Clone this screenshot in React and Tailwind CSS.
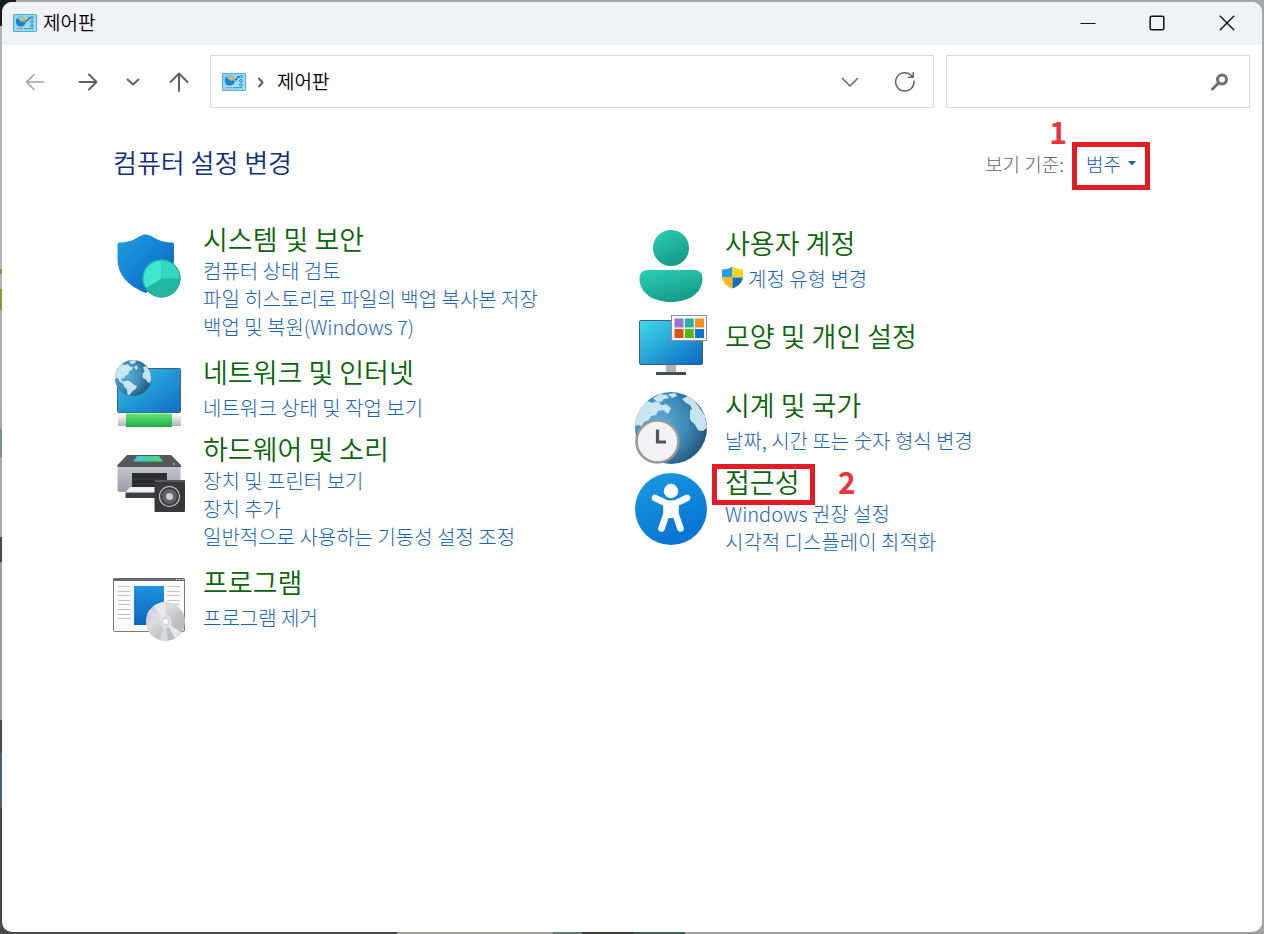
import React from 'react';

const ControlPanelIcon = () => (
  <svg width="24" height="18" viewBox="0 0 24 18" aria-hidden="true" className="shrink-0">
    <defs>
      <linearGradient id="cp" x1="0" y1="0" x2="1" y2="1">
        <stop offset="0" stopColor="#7fd3f3" />
        <stop offset="1" stopColor="#a9e4fb" />
      </linearGradient>
    </defs>
    <rect x=".5" y=".5" width="23" height="17" rx=".5" fill="url(#cp)" stroke="#4fb0d6" />
    <circle cx="7.800" cy="7.600" r="5" fill="#1b84cf" />
    <path d="M8 7.600V2.600a5 5 0 0 1 4.800 5z" fill="#e3b566" />
    <path d="M8 7.600V2.600a5 5 0 0 0-3.600 1.600z" fill="#8fc6e0" />
    <path d="M12.800 6.800h1.400l1.800-3h1.600" stroke="#1f639c" strokeWidth="1.200" fill="none" />
    <rect x="17.500" y="2.600" width="2.800" height="2" rx="1" fill="none" stroke="#2b7cb6" strokeWidth=".9" />
    <rect x="17.500" y="6.600" width="2.800" height="2.400" rx="1.200" fill="none" stroke="#2b7cb6" strokeWidth=".9" />
    <rect x="17.500" y="10.600" width="2.800" height="2.400" rx="1.200" fill="none" stroke="#2b7cb6" strokeWidth=".9" />
    <path d="M3.500 14.700h6.500" stroke="#b3915c" />
    <path d="M11 14.700h9.500" stroke="#3c8bbd" />
  </svg>
);

const Globe = ({ id, children }) => (
  <g>
    <defs>
      <radialGradient id={id} cx=".32" cy=".42" r=".72">
        <stop offset="0" stopColor="#62add4" />
        <stop offset=".55" stopColor="#3f8cb8" />
        <stop offset="1" stopColor="#1f5277" />
      </radialGradient>
      <clipPath id={`${id}c`}>
        <circle cx="36" cy="36" r="36" />
      </clipPath>
    </defs>
    <circle cx="36" cy="36" r="36" fill={`url(#${id})`} />
    <g clipPath={`url(#${id}c)`} fill="#d3edf7" opacity=".92">
      {children}
    </g>
  </g>
);

const SecurityIcon = () => (
  <svg viewBox="0 0 72 72" className="size-full" aria-hidden="true">
    <defs>
      <linearGradient id="sh" x1="0" y1="0" x2="1" y2="1">
        <stop offset="0" stopColor="#20a0e2" />
        <stop offset="1" stopColor="#0660c0" />
      </linearGradient>
    </defs>
    <path d="M32.500 4.500C26 4.500 22 12.500 6 12.500q-1.500 0-1.500 2V29c0 17 13 28 28 34 15-6 28.500-16 28.500-34V14.500q0-2-1.500-2C44 12.500 39 4.500 32.500 4.500z" fill="url(#sh)" />
    <circle cx="48.500" cy="48.500" r="19" fill="#22b8a0" />
    <path d="M48.500 48.500V29.500A19 19 0 0 0 32.500 58.600z" fill="#3fe6d0" />
    <path d="M48.500 48.500V29.500A19 19 0 0 1 67.500 48.500z" fill="#35d6c0" />
    <circle cx="48.500" cy="48.500" r="18.500" fill="none" stroke="#1fa990" />
  </svg>
);

const NetworkIcon = () => (
  <svg viewBox="0 0 72 72" className="size-full" aria-hidden="true">
    <defs>
      <linearGradient id="ns" x1="0" y1="0" x2="1" y2="1">
        <stop offset="0" stopColor="#35c6e6" />
        <stop offset="1" stopColor="#0f6cc4" />
      </linearGradient>
      <linearGradient id="ng" x1="0" y1="0" x2="0" y2="1">
        <stop offset="0" stopColor="#62ea77" />
        <stop offset="1" stopColor="#1fa945" />
      </linearGradient>
      <linearGradient id="nw" x1="0" y1="0" x2="0" y2="1">
        <stop offset="0" stopColor="#ffffff" />
        <stop offset="1" stopColor="#b4b4b8" />
      </linearGradient>
    </defs>
    <rect x="4.500" y="10.500" width="63" height="44" rx="1" fill="url(#ns)" stroke="#456275" />
    <rect x="5" y="56" width="63" height="12" rx="1" fill="url(#nw)" />
    <rect x="13" y="55.500" width="46" height="13.500" fill="url(#ng)" />
    <g transform="translate(2 2) scale(.5)">
      <Globe id="g1">
        <path d="M-2 38C0 24 4 14 12 8l8 2 6-2 4 5 6 1-2 6-6 2-1 6-7 4-2 5-5-1 1 6 5 3-2 3-7-4-5-8z" />
        <path d="M28 3l8-3 8 1-5 6-6 1zM38 13l5-2 3 5-4 4z" />
        <path d="M17 43l8-2 7 3 5 5 7 3-3 6-7 5-5 7-4-1-1-10-7-8z" />
        <path d="M56 14l6-2 10 12v20l-6 2-4-7-6-3-1-8 4-5z" />
      </Globe>
    </g>
  </svg>
);

const HardwareIcon = () => (
  <svg viewBox="0 0 72 72" className="size-full" aria-hidden="true">
    <defs>
      <linearGradient id="pr" x1="0" y1="0" x2="0" y2="1">
        <stop offset="0" stopColor="#c6c9d2" />
        <stop offset="1" stopColor="#979ca7" />
      </linearGradient>
      <linearGradient id="sc" x1="0" y1="0" x2="1" y2="0">
        <stop offset="0" stopColor="#38c7e0" />
        <stop offset="1" stopColor="#4fdc6c" />
      </linearGradient>
    </defs>
    <path d="M4.500 17h63v25a2 2 0 0 1-2 2h-59a2 2 0 0 1-2-2z" fill="url(#pr)" />
    <path d="M14 7h44l10 10v2H4.500v-2z" fill="#55575d" />
    <path d="M24 8h22l4 5.500H20z" fill="url(#sc)" />
    <rect x="60" y="15" width="2" height="2" fill="#43cf5c" />
    <path d="M19 25h35v18H19z" fill="#2c2c30" />
    <path d="M19 31h35M19 36h35" stroke="#3a3a3f" />
    <path d="M17 39h25v5.500H12.500z" fill="#f0f1f3" />
    <path d="M12.500 44.500H42v5.500H12.500z" fill="#3d3d42" />
    <rect x="41.500" y="32" width="30.500" height="32" rx="1" fill="#38383b" />
    <rect x="41.500" y="32" width="30.500" height="2" rx="1" fill="#57575b" />
    <circle cx="56.500" cy="48.500" r="10" fill="#3a3a3d" stroke="#c5c5c7" strokeWidth="1.200" />
    <circle cx="56.500" cy="48.500" r="7.500" fill="#626266" />
    <circle cx="56.500" cy="48.500" r="3.500" fill="#c9cdd2" />
  </svg>
);

const ProgramsIcon = () => (
  <svg viewBox="0 0 72 72" className="size-full" aria-hidden="true">
    <defs>
      <linearGradient id="pb" x1="0" y1="0" x2="0" y2="1">
        <stop offset="0" stopColor="#1c93de" />
        <stop offset="1" stopColor="#0d67bd" />
      </linearGradient>
      <linearGradient id="cd" x1="0" y1="0" x2="1" y2="1">
        <stop offset="0" stopColor="#c2c6ca" />
        <stop offset=".35" stopColor="#dcdedf" />
        <stop offset=".6" stopColor="#c0c3c4" />
        <stop offset="1" stopColor="#b3b6b8" />
      </linearGradient>
    </defs>
    <rect x=".5" y="6.500" width="71" height="53" rx="1.500" fill="#fafafa" stroke="#77787b" />
    <path d="M0 9V8q0-2 2-2h68q2 0 2 2v1z" fill="#68696c" />
    <path d="M63 7.500h1.500M66 7.500h1.500M69 7.500h1.500" stroke="#e8e8e8" />
    <path d="M5 14.500h12M5 19.500h12M5 23.500h12M5 28.500h12M5 32.500h12M5 37.500h12M5 42.500h12M5 46.500h12M54 14.500h13M54 19.500h13M54 23.500h13M54 28.500h13M54 32.500h13" stroke="#c3c4c6" />
    <rect x="21" y="14" width="30" height="39" fill="url(#pb)" />
    <circle cx="52.500" cy="49.500" r="19.500" fill="url(#cd)" />
    <path d="M52.500 49.500L41 33.700A19.500 19.500 0 0 1 52 30z" fill="#f4f4f4" opacity=".6" />
    <path d="M52.500 49.500L34 43a19.500 19.500 0 0 1 3-6z" fill="#e6d2ea" opacity=".7" />
    <path d="M52.500 49.500L62 66.500a19.500 19.500 0 0 0 6-6z" fill="#f1f1f1" opacity=".8" />
    <path d="M52.500 49.500L46 68a19.500 19.500 0 0 0 9 1z" fill="#e7e7e7" opacity=".6" />
    <circle cx="52.500" cy="49.500" r="5.500" fill="#d5d7d8" stroke="#f3f3f3" />
    <circle cx="52.500" cy="49.500" r="2.500" fill="#fff" />
  </svg>
);

const UserIcon = () => (
  <svg viewBox="0 0 72 72" className="size-full" aria-hidden="true">
    <defs>
      <linearGradient id="us" x1="0" y1="0" x2=".5" y2="1">
        <stop offset="0" stopColor="#2cd0b8" />
        <stop offset="1" stopColor="#159c88" />
      </linearGradient>
    </defs>
    <circle cx="36" cy="18" r="18" fill="url(#us)" />
    <path d="M13 40h46q8.500 0 8.500 8.500C67.500 63 54 72 36 72S4.500 63 4.500 48.500Q4.500 40 13 40z" fill="url(#us)" />
  </svg>
);

const AppearanceIcon = () => (
  <svg viewBox="0 0 72 72" className="size-full" aria-hidden="true">
    <defs>
      <linearGradient id="ap" x1="0" y1="0" x2="1" y2="1">
        <stop offset="0" stopColor="#3fdcea" />
        <stop offset="1" stopColor="#0b66c2" />
      </linearGradient>
    </defs>
    <path d="M31 56h10v7H31z" fill="#aab3bd" />
    <path d="M21 63h30v3H21z" fill="#454c55" />
    <rect x="4.500" y="11.500" width="63" height="44" rx="1.500" fill="url(#ap)" stroke="#3f6075" />
    <rect x="36.500" y="6.500" width="35" height="25" fill="#fafafa" stroke="#8d8f92" />
    <path d="M39.500 9.500h9v9h-9z" fill="#9a72d0" />
    <path d="M49.800 9.500h9v9h-9z" fill="#22b3a0" />
    <path d="M60 9.500h9v9h-9z" fill="#ee921b" />
    <path d="M39.500 20h9v9h-9z" fill="#dd5015" />
    <path d="M49.800 20h9v9h-9z" fill="#55b512" />
    <path d="M60 20h9v9h-9z" fill="#0d74d0" />
  </svg>
);

const ClockIcon = () => (
  <svg viewBox="0 0 72 72" className="size-full" aria-hidden="true">
    <Globe id="g2">
      <path d="M0 34C1 22 6 13 12 9l5 2 6-2 3 4 5 1-2 4-6 1-2 4-5 1-2 4-5 2-2 4-4-1z" />
      <path d="M18 6l7-4 7 1 2 3-5 1-3 3-5-1zM26 14l5-2 5 4-3 6-4-3zM33 2l7-1 2 3-5 2z" />
      <path d="M47 7l6-3 5 3 6 8 6 9 2 12-5 3-4-1-2-5-5-4 1-7 3-3-3-2-2-4-4-2z" />
      <path d="M55 18l4-2 9 6 4 12-4 5-5-1-4-7-4-4z" />
    </Globe>
    <circle cx="22.500" cy="49.500" r="21" fill="#f3f3f5" stroke="#98999c" strokeWidth="2.600" />
    <path d="M22.500 37.500v12.500h8.500" fill="none" stroke="#55565a" strokeWidth="3.200" />
  </svg>
);

const AccessibilityIcon = () => (
  <svg viewBox="0 0 72 72" className="size-full" aria-hidden="true">
    <defs>
      <linearGradient id="ac" x1="0" y1="0" x2=".5" y2="1">
        <stop offset="0" stopColor="#1c9be0" />
        <stop offset="1" stopColor="#0874d4" />
      </linearGradient>
    </defs>
    <circle cx="36" cy="36" r="36" fill="url(#ac)" />
    <circle cx="36" cy="18" r="7.200" fill="#fff" />
    <path
      d="M20 25l9.500 4.500q6.500 2.500 13 0L52 25M31.500 31.500v9.500L26.500 55.500M40.500 31.500v9.500L45.500 55.500M36 32v10"
      fill="none"
      stroke="#fff"
      strokeWidth="6.600"
      strokeLinecap="round"
      strokeLinejoin="round"
    />
  </svg>
);

const UacShield = () => (
  <svg width="23" height="23" viewBox="0 0 23 23" aria-hidden="true" className="-mt-1 shrink-0">
    <defs>
      <clipPath id="uac">
        <path d="M11.500.5C9 2.500 5 3.500 1 3.500V10c0 6.500 5 10.500 10.500 12.500C17 20.500 22 16.500 22 10V3.500c-4 0-8-1-10.500-3z" />
      </clipPath>
    </defs>
    <g clipPath="url(#uac)">
      <path d="M0 0h11.500v11.500H0z" fill="#2a9be0" />
      <path d="M11.500 0H23v11.500H11.500z" fill="#fbd31a" />
      <path d="M0 11.500h11.500V23H0z" fill="#f5b91a" />
      <path d="M11.500 11.500H23V23H11.500z" fill="#1a6cb8" />
    </g>
  </svg>
);

const left = [
  { title: '시스템 및 보안', Icon: SecurityIcon, box: 'pb-[15px]', icon: 'mt-[7px]', text: '',
    links: ['컴퓨터 상태 검토', '파일 히스토리로 파일의 백업 복사본 저장', '백업 및 복원(Windows 7)'] },
  { title: '네트워크 및 인터넷', Icon: NetworkIcon, box: 'pb-[3px]', icon: 'mt-[2px]', text: 'gap-1',
    links: ['네트워크 상태 및 작업 보기'] },
  { title: '하드웨어 및 소리', Icon: HardwareIcon, box: 'pb-[15px]', icon: 'mt-[15px]', text: '',
    links: ['장치 및 프린터 보기', '장치 추가', '일반적으로 사용하는 기동성 설정 조정'] },
  { title: '프로그램', Icon: ProgramsIcon, box: '', icon: 'mt-[6px]', text: 'gap-1', links: ['프로그램 제거'] },
];

const right = [
  { title: '사용자 계정', Icon: UserIcon, box: 'pt-1 pb-[7px]', icon: 'mt-[3px]', text: 'gap-1', shield: true,
    links: ['계정 유형 변경'] },
  { title: '모양 및 개인 설정', Icon: AppearanceIcon, box: 'pb-2', icon: '', text: 'pt-[11px]', links: [] },
  { title: '시계 및 국가', Icon: ClockIcon, box: 'pb-[2px]', icon: 'mt-[3px]', text: 'gap-1',
    links: ['날짜, 시간 또는 숫자 형식 변경'] },
  { title: '접근성', Icon: AccessibilityIcon, box: '', icon: 'mt-[7px]', text: '', marked: true,
    links: ['Windows 권장 설정', '시각적 디스플레이 최적화'] },
];

function Category({ item }) {
  const { title, Icon, box, icon, text, links, shield, marked } = item;
  return (
    <section className={`flex items-start gap-[18px] ${box}`}>
      <div className={`size-[72px] shrink-0 ${icon}`}>
        <Icon />
      </div>
      <div className={`flex flex-col items-start ${text}`}>
        <h2 className="relative pb-[2px] text-[27px] leading-8 font-[350] text-[#0b650b]">
          <a href="#">{title}</a>
          {marked && (
            <>
              <span className="pointer-events-none absolute -top-[2px] -left-[13px] h-[41px] w-[103px] border-5 border-[#e31b23]" />
              <span className="absolute top-0 left-[113px] text-[30px] leading-none font-bold text-[#e8343c]">2</span>
            </>
          )}
        </h2>
        {links.map((label) => (
          <a key={label} href="#" className={`flex items-center gap-1 text-[20px] leading-7 text-[#1a66b0] ${shield ? '-ml-1' : ''}`}>
            {shield && <UacShield />}
            {label}
          </a>
        ))}
      </div>
    </section>
  );
}

const stroke = { fill: 'none', strokeWidth: 2, strokeLinecap: 'round', strokeLinejoin: 'round' };

export default function App() {
  return (
    <div className="relative flex min-h-screen flex-col bg-[#a6a6a6] p-[2px] font-['Noto_Sans_CJK_KR',sans-serif] text-[19px] font-light">
      <div className="absolute inset-y-0 left-0 w-4 bg-[linear-gradient(#1c1c20_26px,#b4b4b4_26px,#b4b4b4_269px,#7f9f35_269px,#7f9f35_274px,#b4b4b4_274px,#b4b4b4_289px,#7f9f35_289px,#7f9f35_310px,#b0b0b0_310px,#b0b0b0_405px,#b5a898_405px,#b5a898_429px,#6f9690_429px,#6f9690_457px,#a8a8a8_457px,#a8a8a8_537px,#4a4a4a_537px,#4a4a4a_562px,#9c9c9c_562px,#9c9c9c_720px,#4c4d52_720px,#4c4d52_753px,#46607c_753px,#46607c_808px,#48484c_808px)]" />
      <div className="absolute inset-x-0 bottom-0 h-[2px] bg-[linear-gradient(to_right,#4a4a4c_397px,#9c9c9a_397px,#9c9c9a_553px,#55806f_553px,#55806f_582px,#3a3d3a_582px,#3a3d3a_634px,#386355_634px,#386355_685px,#9c9c9c_685px)]" />
      <div className="relative flex grow flex-col overflow-hidden rounded-[10px] bg-white">
        <header className="flex h-[43px] items-center bg-[#f1f2f6] pb-[2px] pl-[11px]">
          <ControlPanelIcon />
          <h1 className="grow pl-[6px] font-[350] text-black">제어판</h1>
          <button aria-label="최소화" className="flex h-full w-[70px] items-center justify-center">
            <svg width="16" height="16" viewBox="0 0 16 16"><path d="M.5 8.500h15" stroke="#111" /></svg>
          </button>
          <button aria-label="최대화" className="flex h-full w-[68px] items-center justify-center">
            <svg width="16" height="16" viewBox="0 0 16 16"><rect x="1.200" y="1.200" width="13.600" height="13.600" rx="1.500" fill="none" stroke="#111" strokeWidth="1.500" /></svg>
          </button>
          <button aria-label="닫기" className="flex h-full w-[71px] items-center justify-center">
            <svg width="16" height="16" viewBox="0 0 16 16"><path d="M.8.8l14.400 14.400M15.200.8L.8 15.200" stroke="#111" strokeWidth="1.400" /></svg>
          </button>
        </header>

        <div className="flex items-center pt-[10px] pr-3">
          <nav className="flex w-[208px] shrink-0 items-center pl-[23px]">
            <button aria-label="뒤로">
              <svg width="20" height="20" viewBox="0 0 20 20" stroke="#a2a2a2" {...stroke} strokeWidth="1.600"><path d="M18.500 10H2M9 2.500L1.500 10 9 17.500" /></svg>
            </button>
            <button aria-label="앞으로" className="ml-[33px]">
              <svg width="20" height="20" viewBox="0 0 20 20" stroke="#606060" {...stroke}><path d="M1.500 10H18M11 2.500l7.500 7.500-7.500 7.500" /></svg>
            </button>
            <button aria-label="최근 위치" className="ml-[28px]">
              <svg width="14" height="20" viewBox="0 0 14 20" stroke="#606060" {...stroke}><path d="M1.500 7.500L7 12.500l5.500-5" /></svg>
            </button>
            <button aria-label="위로" className="ml-[29px]">
              <svg width="20" height="20" viewBox="0 0 20 20" stroke="#606060" {...stroke}><path d="M10 19V2M1.500 10L10 1.500l8.500 8.500" /></svg>
            </button>
          </nav>
          <div className="flex h-[53px] grow items-center border border-[#d9d9d9] pr-[17px] pl-[11px]">
            <ControlPanelIcon />
            <svg width="10" height="12" viewBox="0 0 10 12" stroke="#606060" {...stroke} className="ml-[10px]"><path d="M3 2.500l3.500 4L3 10.500" /></svg>
            <span className="grow pl-[11px] font-[350] text-black">제어판</span>
            <button aria-label="이전 위치">
              <svg width="18" height="20" viewBox="0 0 18 20" stroke="#666" {...stroke} strokeWidth="1.500"><path d="M1.500 6.500L9 14l7.500-7.500" /></svg>
            </button>
            <button aria-label="새로 고침" className="ml-[35px]">
              <svg width="22" height="22" viewBox="0 0 22 22" stroke="#666" {...stroke} strokeWidth="1.500"><path d="M20 10A9.200 9.200 0 1 1 17.500 4.500L19 6M19.300 1.500V6.200H14.500" /></svg>
            </button>
          </div>
          <label className="ml-3 flex h-[53px] w-[304px] shrink-0 items-center border border-[#d9d9d9] pr-[20px]">
            <input type="text" aria-label="제어판 검색" className="min-w-0 grow px-3 outline-none" />
            <svg width="19" height="18" viewBox="0 0 19 18" fill="none" stroke="#707070" aria-hidden="true">
              <circle cx="12" cy="6.500" r="4.500" strokeWidth="3" />
              <path d="M8.500 10L2.500 16" strokeWidth="3" strokeLinecap="round" />
            </svg>
          </label>
        </div>

        <main className="pr-[112px] pl-[111px]">
          <div className="flex h-[115px] items-start justify-between pt-[34px]">
            <h2 className="pt-[3px] text-[26px] leading-[34px] font-[350] text-[#0f3079]">컴퓨터 설정 변경</h2>
            <div className="relative flex items-start gap-2 leading-[34px] text-[#5c6670]">
              <label htmlFor="view" className="pt-[5px]">보기 기준:</label>
              <span className="absolute -top-[26px] left-[64px] text-[30px] leading-none font-bold text-[#e8343c]">1</span>
              <div className="flex h-12 w-[78px] items-start justify-center gap-[7px] border-5 border-[#e31b23]">
                <select id="view" className="h-[34px] w-[35px] appearance-none leading-[34px] text-[#1a5fa8] outline-none">
                  <option>범주</option>
                </select>
                <svg width="8" height="5" viewBox="0 0 8 5" aria-hidden="true" className="mt-[14px]"><path d="M0 0h8L4 4.500z" fill="#1a5fa8" /></svg>
              </div>
            </div>
          </div>
          <div className="flex">
            <div className="flex w-[522px] shrink-0 flex-col">
              {left.map((item) => <Category key={item.title} item={item} />)}
            </div>
            <div className="flex grow flex-col">
              {right.map((item) => <Category key={item.title} item={item} />)}
            </div>
          </div>
        </main>
      </div>
    </div>
  );
}
